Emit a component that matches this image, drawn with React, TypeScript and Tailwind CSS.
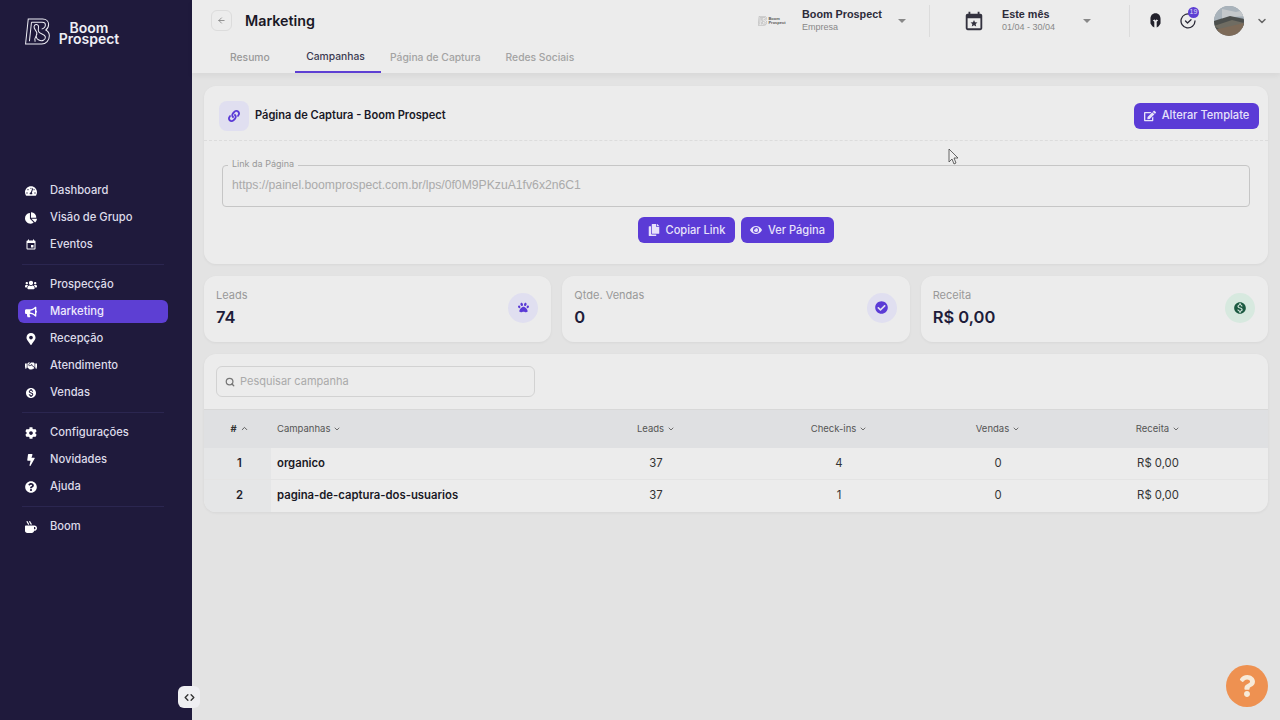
import { Fragment } from "react";
import { ArrowLeft, ChevronDown, ChevronUp, ChevronsLeftRight, Search } from "lucide-react";
import {
  FaBolt,
  FaBullhorn,
  FaChartPie,
  FaCheckCircle,
  FaCog,
  FaCopy,
  FaEdit,
  FaEye,
  FaHandshake,
  FaLink,
  FaMapMarkerAlt,
  FaMugHot,
  FaPaw,
  FaQuestion,
  FaQuestionCircle,
  FaTachometerAlt,
  FaUsers,
} from "react-icons/fa";
import { MdEvent, MdMonetizationOn } from "react-icons/md";
import type { IconType } from "react-icons";

interface NavItem {
  label: string;
  icon: IconType;
  active?: boolean;
}

const navGroups: NavItem[][] = [
  [
    { label: "Dashboard", icon: FaTachometerAlt },
    { label: "Visão de Grupo", icon: FaChartPie },
    { label: "Eventos", icon: MdEvent },
  ],
  [
    { label: "Prospecção", icon: FaUsers },
    { label: "Marketing", icon: FaBullhorn, active: true },
    { label: "Recepção", icon: FaMapMarkerAlt },
    { label: "Atendimento", icon: FaHandshake },
    { label: "Vendas", icon: MdMonetizationOn },
  ],
  [
    { label: "Configurações", icon: FaCog },
    { label: "Novidades", icon: FaBolt },
    { label: "Ajuda", icon: FaQuestionCircle },
  ],
  [{ label: "Boom", icon: FaMugHot }],
];

const rows = [
  { id: 1, name: "organico", leads: 37, checkins: 4, vendas: 0, receita: "R$ 0,00" },
  { id: 2, name: "pagina-de-captura-dos-usuarios", leads: 37, checkins: 1, vendas: 0, receita: "R$ 0,00" },
];

function LogoMark({ className }: { className?: string }) {
  return (
    <svg viewBox="0 0 27 30" fill="none" stroke="currentColor" strokeWidth="1.1" className={className}>
      <path d="M3.5 1H19c4 0 6.5 2.6 6.5 6 0 2.6-1.2 4.6-3 5.8 2.2 1.2 3.8 3.2 3.8 6.2 0 5-3.6 9-8.3 9H.6z" />
      <path d="M7 4.5H18.6c2 0 3.4 1.2 3.4 3 0 2.2-1.6 3.6-4 4.4M4.8 25l2.2-20.5" />
      <path d="M11 25.5c-2.2-5 2.5-5.5 1.8-9.5-.5-2.8-3.4-4-3-7 .3-2.4 3.6-3 4.6-.8 1 2.2-1 4 .4 6.5 1.6 2.8 6.8 2.2 7.2 5.6.4 3.4-3.8 5.2-7 3.4-2.4-1.4-3.4-4.2-2.4-6.6" />
    </svg>
  );
}

function Sidebar() {
  return (
    <aside className="flex w-[192px] shrink-0 flex-col bg-[#1f1a3c] pl-[18px] pr-[24px]">
      <div className="flex h-[179px] shrink-0 items-start gap-[7px] pl-[7px] pt-[18px] text-[#eeeef5]">
        <LogoMark className="h-[28px] w-[25px]" />
        <div className="mt-[4px] w-[64px] text-center text-[14px] font-semibold leading-[11px]">Boom Prospect</div>
      </div>
      <nav className="flex flex-col">
        {navGroups.map((group, i) => (
          <Fragment key={i}>
            {i > 0 && <div className="mx-1 my-[8px] h-px bg-[#2b2650]" />}
            <div className="flex flex-col gap-1">
              {group.map((item) => (
                <a
                  key={item.label}
                  className={`flex h-[23px] items-center gap-[13px] rounded-md pl-[7px] text-[11.2px] font-medium ${
                    item.active ? "bg-[#5d3fd3] text-[#eeeafc]" : "text-[#dddbe9]"
                  }`}
                >
                  <span className="flex w-3 justify-center text-white">
                    <item.icon className="text-[12px]" />
                  </span>
                  {item.label}
                </a>
              ))}
            </div>
          </Fragment>
        ))}
      </nav>
    </aside>
  );
}

function Caret() {
  return <span className="h-0 w-0 border-x-[4px] border-t-[4px] border-x-transparent border-t-[#888]" />;
}

function Avatar() {
  return (
    <svg viewBox="0 0 30 30" className="h-[30px] w-[30px] rounded-full">
      <rect width="30" height="30" fill="#8d99a3" />
      <path d="M0 0h30v12L14 10 0 15z" fill="#a9b3bb" />
      <path d="M8 3l14 3 8-2v6l-12 1-10 3z" fill="#c4c8cb" />
      <path d="M0 15l16-5 14 3v8L8 27 0 24z" fill="#4c4f4d" />
      <path d="M0 20l18-6 12 3v4L10 26z" fill="#6f6c62" />
      <path d="M0 24l30-7v13H0z" fill="#7d6a58" />
    </svg>
  );
}

function TopBar() {
  return (
    <header className="h-[73px] shrink-0 bg-[#ececec] shadow-[0_3px_6px_rgba(0,0,0,0.05)]">
      <div className="flex h-[41px] items-center pl-[19px] pr-[12px]">
        <button className="flex h-[21px] w-[21px] items-center justify-center rounded-md border border-[#dcdcdc] text-[#777]">
          <ArrowLeft className="h-[9px] w-[9px]" />
        </button>
        <h1 className="ml-[13px] text-[14.3px] font-semibold text-[#191826]">Marketing</h1>

        <div className="ml-auto flex items-center font-['Liberation_Sans',sans-serif]">
          <div className="flex w-[30px] items-center justify-center gap-px text-[#8a8a8a]">
            <LogoMark className="h-[10px] w-[9px]" />
            <span className="text-[4px] font-bold leading-[4px] text-[#555]">
              Boom
              <br />
              Prospect
            </span>
          </div>
          <div className="ml-[15px] w-[96px] leading-none">
            <div className="text-[10.8px] font-bold text-[#2c2b3a]">Boom Prospect</div>
            <div className="mt-[4px] text-[9px] text-[#888]">Empresa</div>
          </div>
          <Caret />
          <div className="ml-[23px] h-[32px] w-px bg-[#dcdcdc]" />
          <svg viewBox="0 0 24 24" className="ml-[33px] h-[22px] w-[22px]" fill="#33323f">
            <path d="M19 4h-1V2h-2v2H8V2H6v2H5a2 2 0 0 0-2 2v14a2 2 0 0 0 2 2h14a2 2 0 0 0 2-2V6a2 2 0 0 0-2-2zm0 16H5V9h14v11z" />
            <path d="M12 10.8l1.1 2.5 2.7.2-2 1.8.6 2.7-2.4-1.4-2.4 1.4.6-2.7-2-1.8 2.7-.2z" />
          </svg>
          <div className="ml-[17px] w-[81px] leading-none">
            <div className="text-[10.8px] font-bold text-[#2c2b3a]">Este mês</div>
            <div className="mt-[4px] text-[9px] text-[#888]">01/04 - 30/04</div>
          </div>
          <Caret />
          <div className="ml-[38px] h-[32px] w-px bg-[#dcdcdc]" />
          <svg viewBox="0 0 12 16" className="ml-[20px] h-[15px] w-[11px]" fill="#22212b">
            <path d="M6 0C2.5 0 .5 2.6.5 6.2v5l2 3 2.2 1.3V9.4L3 7.6 5.3 7 6 8.2 6.7 7 9 7.6 7.3 9.4v6.1l2.2-1.3 2-3v-5C11.5 2.6 9.5 0 6 0z" />
          </svg>
          <div className="relative ml-[19px] h-[16px] w-[16px]">
            <svg viewBox="0 0 16 16" fill="none" stroke="#2a2936" strokeWidth="1.3" className="h-4 w-4">
              <path d="M11 1.6A7 7 0 1 0 15 8" strokeLinecap="round" />
              <path d="M5.5 8l2 2 3.5-3.2" strokeLinecap="round" strokeLinejoin="round" />
            </svg>
            <span className="absolute -right-[3px] -top-[6px] flex h-[11px] w-[11px] items-center justify-center rounded-full bg-[#5d3fd3] text-[7px] text-[#ddd8f5]">
              19
            </span>
          </div>
          <div className="ml-[18px]">
            <Avatar />
          </div>
          <ChevronDown className="ml-[12px] h-[12px] w-[12px] text-[#666]" strokeWidth={3} />
        </div>
      </div>
      <nav className="flex h-[32px] pl-[26px] text-[10.3px] font-medium">
        <a className="flex w-[77px] items-center pl-[12px] pt-[1px] text-[#999]">Resumo</a>
        <a className="flex w-[86px] items-center justify-center border-b-2 border-[#5d3fd3] pr-[5px] pt-[2px] text-[#3a3950]">Campanhas</a>
        <a className="ml-[9px] flex items-center pt-[1px] text-[#a3a3a3]">Página de Captura</a>
        <a className="ml-[25px] flex items-center pt-[1px] text-[#a3a3a3]">Redes Sociais</a>
      </nav>
    </header>
  );
}

function PrimaryButton({ icon: Icon, label, width }: { icon: IconType; label: string; width: string }) {
  return (
    <button className={`flex h-[26px] items-center justify-center gap-[6px] rounded-md bg-[#5b3bd6] text-[11.1px] font-medium text-[#e7e2fa] ${width}`}>
      <Icon className="text-[12px]" />
      {label}
    </button>
  );
}

function StatCard({
  label,
  value,
  icon: Icon,
  tone,
  iconSize,
}: {
  label: string;
  value: string;
  icon: IconType;
  tone: string;
  iconSize: string;
}) {
  return (
    <div className="flex h-[66px] items-center justify-between rounded-xl bg-[#ececec] pl-[12px] pr-[13px] shadow-[0_1px_3px_rgba(0,0,0,0.05)]">
      <div className="pb-[4px]">
        <div className="text-[11px] leading-[14px] text-[#999]">{label}</div>
        <div className="mt-[6px] text-[16.5px] font-semibold leading-[18px] text-[#1e1c3a]">{value}</div>
      </div>
      <div className={`-mt-[3px] flex h-[30px] w-[30px] items-center justify-center rounded-full ${tone}`}>
        <Icon className={iconSize} />
      </div>
    </div>
  );
}

function CampaignsTable() {
  const sortHead = (label: string) => (
    <span className="inline-flex items-center gap-[3px]">
      {label}
      <ChevronDown className="h-[8px] w-[8px]" strokeWidth={2.5} />
    </span>
  );
  return (
    <table className="w-full table-fixed border-t border-[#d8d8d8] text-[11.3px]">
      <thead>
        <tr className="h-[38px] bg-[#dfe0e2] text-[9.5px] font-normal text-[#555]">
          <th className="w-[67px] pl-[4px] text-center font-normal">
            <span className="inline-flex items-center gap-[3px]">
              <b className="text-[#333]">#</b>
              <ChevronUp className="h-[9px] w-[9px]" strokeWidth={2.5} />
            </span>
          </th>
          <th className="w-[296px] pl-[6px] text-left font-normal">{sortHead("Campanhas")}</th>
          <th className="w-[178px] font-normal">{sortHead("Leads")}</th>
          <th className="w-[188px] font-normal">{sortHead("Check-ins")}</th>
          <th className="w-[130px] font-normal">{sortHead("Vendas")}</th>
          <th className="w-[190px] font-normal">{sortHead("Receita")}</th>
          <th />
        </tr>
      </thead>
      <tbody>
        {rows.map((row, i) => (
          <tr key={row.id} className={`h-[32px] text-[#333] ${i === 0 ? "border-b border-[#e4e4e4]" : ""}`}>
            <td className="bg-[#e5e6e7] pl-[4px] text-center font-semibold text-[#22212b]">{row.id}</td>
            <td className="pl-[6px] font-semibold text-[#1a1925]">{row.name}</td>
            <td className="text-center">{row.leads}</td>
            <td className="text-center">{row.checkins}</td>
            <td className="text-center">{row.vendas}</td>
            <td className="text-center">{row.receita}</td>
            <td />
          </tr>
        ))}
      </tbody>
    </table>
  );
}

export default function App() {
  return (
    <div className="relative flex h-[720px] w-[1280px] overflow-hidden bg-[#e3e3e3] font-['Inter',sans-serif]">
      <Sidebar />
      <main className="flex min-w-0 flex-1 flex-col">
        <TopBar />
        <div className="flex flex-col gap-3 px-3 pt-[13px]">
          {/* Link da pagina */}
          <section className="rounded-xl bg-[#ececec] shadow-[0_1px_3px_rgba(0,0,0,0.05)]">
            <div className="flex h-[55px] items-center justify-between border-b border-dashed border-[#dcdcdc] pl-[15px] pr-[9px] pt-[5px]">
              <div className="flex items-center gap-[6px]">
                <div className="flex h-[30px] w-[30px] items-center justify-center rounded-lg bg-[#e0dff0] text-[#5b3bd6]">
                  <FaLink className="text-[12px]" />
                </div>
                <h2 className="text-[11.1px] font-semibold text-[#191826]">Página de Captura - Boom Prospect</h2>
              </div>
              <PrimaryButton icon={FaEdit} label="Alterar Template" width="w-[125px]" />
            </div>
            <div className="px-[18px] pb-[21px] pt-[24px]">
              <div className="relative flex h-[42px] items-center rounded-sm border border-[#c6c6c6] pb-[2px] pl-[9px] font-['Liberation_Sans',sans-serif] text-[12.2px] text-[#aaa]">
                <span className="absolute -top-[8px] left-[5px] bg-[#ececec] px-[4px] font-['Inter',sans-serif] text-[9px] leading-[12px] text-[#999]">
                  Link da Página
                </span>
                https://painel.boomprospect.com.br/lps/0f0M9PKzuA1fv6x2n6C1
              </div>
              <div className="mt-[10px] flex justify-center gap-[6px]">
                <PrimaryButton icon={FaCopy} label="Copiar Link" width="w-[97px]" />
                <PrimaryButton icon={FaEye} label="Ver Página" width="w-[93px]" />
              </div>
            </div>
          </section>

          {/* Totais */}
          <div className="grid grid-cols-3 gap-[11px]">
            <StatCard label="Leads" value="74" icon={FaPaw} iconSize="text-[11px]" tone="bg-[#e0dff0] text-[#5b3bd6]" />
            <StatCard label="Qtde. Vendas" value="0" icon={FaCheckCircle} iconSize="text-[13px]" tone="bg-[#e0dff0] text-[#5b3bd6]" />
            <StatCard label="Receita" value="R$ 0,00" icon={MdMonetizationOn} iconSize="text-[14px]" tone="bg-[#d7e9df] text-[#1c5a41]" />
          </div>

          {/* Campanhas */}
          <section className="overflow-hidden rounded-xl bg-[#ececec] shadow-[0_1px_3px_rgba(0,0,0,0.06)]">
            <div className="px-3 py-3">
              <div className="flex h-[31px] w-[319px] items-center gap-[5px] rounded-md border border-[#d2d2d2] pl-[8px] text-[11px] text-[#aaa]">
                <Search className="h-[10px] w-[10px] text-[#777]" strokeWidth={3} />
                Pesquisar campanha
              </div>
            </div>
            <CampaignsTable />
          </section>
        </div>
      </main>

      {/* sobreposicoes */}
      <button className="absolute left-[178px] top-[686px] flex h-[22px] w-[22px] items-center justify-center rounded-md bg-[#efeff2] text-[#333]">
        <ChevronsLeftRight className="h-[13px] w-[13px]" strokeWidth={2.5} />
      </button>
      <button className="absolute left-[1226px] top-[665px] flex h-[42px] w-[42px] items-center justify-center rounded-full bg-[#ee9151] text-[#f7ead9]">
        <FaQuestion className="text-[22px]" />
      </button>
      <svg viewBox="0 0 12 18" className="absolute left-[948px] top-[148px] h-[18px] w-[12px]" fill="#eee" stroke="#444" strokeWidth="0.8">
        <path d="M1 1v13l3-3 2 5 2-1-2-5h4z" />
      </svg>
    </div>
  );
}
